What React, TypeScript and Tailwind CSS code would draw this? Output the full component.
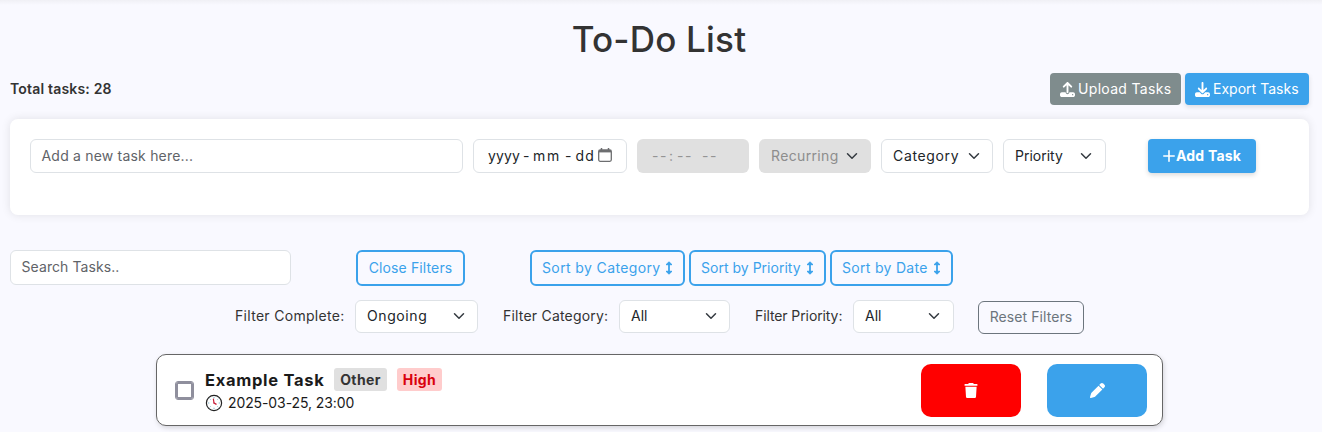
import type { ReactNode } from "react";
import { FaDownload, FaPen, FaTrash, FaUpload } from "react-icons/fa6";

function Chevron() {
  return (
    <svg viewBox="0 0 16 16" className="h-3 w-3 shrink-0" fill="none" stroke="#343a40" strokeWidth="2" strokeLinecap="round" strokeLinejoin="round">
      <path d="m2 5 6 6 6-6" />
    </svg>
  );
}

function Clock() {
  return (
    <svg viewBox="0 0 18 18" className="h-[18px] w-[18px]" fill="none" strokeLinecap="round">
      <circle cx="9" cy="9" r="7.6" fill="#fff" stroke="#222" strokeWidth="1.2" />
      <path d="M9 3.4v.5M9 14.1v.5M3.4 9h.5M14.1 9h.5M5 5l.3.3M13 5l-.3.3M5 13l.3-.3M13 13l-.3-.3" stroke="#7fb8cf" strokeWidth="1" />
      <path d="M9 9 8.4 5.2" stroke="#c81e3a" strokeWidth="1.2" />
      <path d="m9 9 2 1.2" stroke="#c81e3a" strokeWidth="1.4" />
    </svg>
  );
}

function Select({ children, className }: { children: ReactNode; className: string }) {
  return (
    <div className={`flex shrink-0 items-center justify-between rounded-md border border-[#dee2e6] bg-white pl-[11px] text-[#212529] ${className}`}>
      {children}
      <Chevron />
    </div>
  );
}

function SortButton({ children, className }: { children: ReactNode; className: string }) {
  return (
    <button className={`flex h-9 shrink-0 items-center justify-between rounded-md border-2 border-[#3ba2eb] pr-[10px] pl-[10px] text-[#3ba2eb] ${className}`}>
      {children}
      <svg viewBox="0 0 8 14" className="h-[14px] w-2" fill="currentColor" stroke="currentColor" strokeLinejoin="round">
        <path d="M4 2v10" strokeWidth="1.8" />
        <path d="M4 .8 7 3.7H1zM4 13.2l3-2.9H1z" strokeWidth="1" />
      </svg>
    </button>
  );
}

export default function App() {
  return (
    <div className="h-[432px] overflow-hidden bg-[#f9f9ff] font-['Inter',sans-serif] text-sm leading-5 whitespace-nowrap text-[#333]">
      <div className="h-[5px] bg-linear-to-b from-[#f0f0f5] to-[#f9f9ff]" />
      <div className="px-[10px]">
        <h1 className="flex h-[68px] items-center justify-center pr-[4px] pb-[1px] text-[35px] font-medium tracking-[0.2px]">To-Do List</h1>
        <div className="flex h-8 items-center pr-[3px]">
          <span className="mr-auto font-semibold tracking-[0.18px]">Total tasks: 28</span>
          <button className="mr-1 flex h-8 w-[131px] items-center gap-[3px] rounded bg-[#7f8c8d] pl-[10px] tracking-[0.32px] text-white">
            <FaUpload className="h-[15px] w-[15px]" />
            Upload Tasks
          </button>
          <button className="flex h-8 w-[124px] items-center gap-[3px] rounded bg-[#3ba2eb] pl-[10px] tracking-[0.02px] text-white shadow-[0_2px_5px_rgba(0,0,0,0.12)]">
            <FaDownload className="h-[15px] w-[15px]" />
            Export Tasks
          </button>
        </div>

        <div className="mt-[14px] mr-[3px] flex h-24 items-start rounded-lg bg-white p-5 shadow-[0_0_10px_rgba(0,0,0,0.1)]">
          <div className="mr-[10px] flex h-[34px] w-[433px] items-center rounded-md border border-[#dee2e6] pl-[10.5px] tracking-[0.2px] text-[#5f6368]">
            Add a new task here...
          </div>
          <div className="mr-[10px] flex h-[34px] w-[154px] items-center rounded-md border border-[#dee2e6] pl-[14px] text-[#212529]">
            <span className="w-[35px] tracking-[0.1px]">yyyy</span>
            <span className="w-[10px]">-</span>
            <span className="w-[32px] tracking-[1.8px]">mm</span>
            <span className="w-[10.5px]">-</span>
            <span className="w-[22.5px] tracking-[1.2px]">dd</span>
            <svg viewBox="0 0 14 14" className="mb-[2px] h-[14px] w-[14px]" fill="none" stroke="#6d6e70">
              <rect x=".7" y="2" width="12.6" height="11.3" rx="1.5" strokeWidth="1.3" />
              <path d="M1 3.2h12" strokeWidth="2.4" />
              <path d="M3.5 0v2M10.5 0v2" strokeWidth="1.5" />
            </svg>
          </div>
          <div className="mr-[10px] flex h-[34px] w-28 items-center rounded-md bg-[#e0e0e0] pl-[15px] text-[#949494]">
            <span className="w-[17px] tracking-[1.6px]">--</span>
            <span className="w-2">:</span>
            <span className="w-[25px] tracking-[1.6px]">--</span>
            <span className="tracking-[1.6px]">--</span>
          </div>
          <div className="mr-[10px] flex h-[34px] w-28 items-center justify-between rounded-md bg-[#e0e0e0] pr-[13px] pl-3 tracking-[0.35px] text-[#8d8d8d]">
            Recurring
            <Chevron />
          </div>
          <Select className="mr-[10px] h-[34px] w-28 pr-3 tracking-[0.65px]">Category</Select>
          <Select className="mr-[42px] h-[34px] w-[103px] pr-[13px]">Priority</Select>
          <button className="flex h-[34px] w-[108px] items-center gap-[1px] rounded bg-[#3ba2eb] pl-[15px] font-bold tracking-[0.2px] text-white shadow-[0_2px_5px_rgba(0,0,0,0.15)]">
            <svg viewBox="0 0 12 12" className="h-3 w-3" stroke="#fff" strokeWidth="1.6" strokeLinecap="round">
              <path d="M6 .8v10.4M.8 6h10.4" />
            </svg>
            Add Task
          </button>
        </div>

        <div className="mt-[35px] flex h-9 items-start">
          <div className="mr-[65px] flex h-[35px] w-[281px] items-center rounded-md border border-[#dee2e6] bg-white pb-[1px] pl-[10.5px] tracking-[0.08px] text-[#5f6368]">
            Search Tasks..
          </div>
          <button className="mr-[65px] h-9 w-[109px] rounded-md border-2 border-[#3ba2eb] tracking-[0.12px] text-[#3ba2eb]">Close Filters</button>
          <div className="flex gap-1">
            <SortButton className="w-[155px] tracking-[0.38px]">Sort by Category</SortButton>
            <SortButton className="w-[137px] tracking-[0.02px]">Sort by Priority</SortButton>
            <SortButton className="w-[123px] tracking-[0.3px]">Sort by Date</SortButton>
          </div>
        </div>

        <div className="mt-[14px] flex h-[34px] items-start pl-[225px]">
          <span className="mt-[6px] w-[120px] tracking-[0.3px]">Filter Complete:</span>
          <Select className="mr-[25px] h-[33px] w-[123px] pr-3 pb-[1px] tracking-[0.6px]">Ongoing</Select>
          <span className="mt-[6px] w-[116px] tracking-[0.2px]">Filter Category:</span>
          <Select className="mr-[25px] h-[33px] w-[111px] pr-3 pb-[1px]">All</Select>
          <span className="mt-[6px] w-[98px] tracking-[-0.1px]">Filter Priority:</span>
          <Select className="mr-6 h-[33px] w-[101px] pr-[13px] pb-[1px]">All</Select>
          <button className="mt-[1px] h-[33px] w-[106px] rounded-md border border-[#6c757d] pb-[1px] tracking-[0.08px] text-[#6c757d]">Reset Filters</button>
        </div>

        <div className="mt-5 ml-[146px] flex h-[72px] w-[1007px] items-center rounded-[10px] border border-[#666] bg-white pr-[15px] pl-[19px] text-[#1a1a1a] shadow-[1px_2px_5px_rgba(0,0,0,0.15)]">
          <div className="mr-3 h-[17px] w-[17px] rounded-[2px] border-[2.5px] border-[#8f8f9d] bg-white outline-[0.5px] outline-[#8f8f9d]" />
          <div className="mr-auto pt-[1px]">
            <div className="flex h-6 items-center">
              <span className="w-[129px] pt-[1px] text-[16.5px] font-bold tracking-[0.7px]">Example Task</span>
              <span className="mr-[10px] flex h-[23px] w-[53px] items-center justify-center rounded-[3px] bg-[#e0e0e0] font-bold tracking-[0.4px] text-[#333]">Other</span>
              <span className="flex h-[23px] w-[45px] items-center justify-center rounded-[3px] bg-[#ffcccc] font-bold tracking-[0.4px] text-[#d9000d]">High</span>
            </div>
            <div className="flex h-[22px] items-center gap-[5px] pt-[1px] tracking-[-0.1px]">
              <Clock />
              2025-03-25, 23:00
            </div>
          </div>
          <button className="mr-[26px] flex h-[53px] w-[100px] items-center justify-center rounded-[10px] bg-[#ff0000] text-white">
            <FaTrash className="h-[15px] w-[14px]" />
          </button>
          <button className="flex h-[53px] w-[100px] items-center justify-center rounded-[10px] bg-[#3ba2eb] text-white">
            <FaPen className="h-[15px] w-[15px]" />
          </button>
        </div>
      </div>
    </div>
  );
}
